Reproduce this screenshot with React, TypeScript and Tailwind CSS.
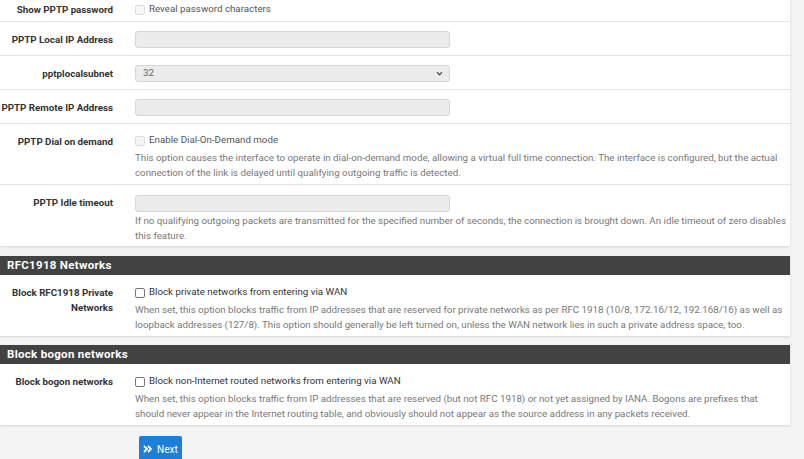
import React from 'react';

const font = { fontFamily: 'Roboto, "Open Sans", sans-serif' };

function Row({ label, children, className = '' }: { label: React.ReactNode; children: React.ReactNode; className?: string }) {
  return (
    <div className={`flex border-t border-[#e4e4e4] ${className}`}>
      <div className="w-[124px] shrink-0 pr-[11px] text-right text-[9.75px] font-bold leading-[15px] text-[#333] pt-[10px] whitespace-nowrap">
        {label}
      </div>
      <div className="flex-1 pl-[11px] pr-[1px]">{children}</div>
    </div>
  );
}

function Check({ text, disabled = false }: { text: string; disabled?: boolean }) {
  return (
    <label className={`flex items-center gap-[4px] h-[17px] text-[9.75px] ${disabled ? 'text-[#555]' : 'text-[#333]'}`}>
      <span
        className={`w-[10px] h-[10px] rounded-[2px] border ${disabled ? 'border-[#ddd] bg-[#f6f6f6]' : 'border-[#777] bg-white'}`}
      />
      {text}
    </label>
  );
}

function Help({ children }: { children: React.ReactNode }) {
  return <p className="text-[9.75px] leading-[15px] text-[#777]">{children}</p>;
}

function Input() {
  return <div className="w-[315px] h-[17px] rounded-[3px] border border-[#d6d6d6] bg-[#ececec]" />;
}

function Header({ title }: { title: string }) {
  return (
    <div className="h-[19px] bg-[#424242] text-white text-[11.5px] font-bold tracking-[0.3px] leading-[19px] pl-[7px]">
      {title}
    </div>
  );
}

export default function App() {
  return (
    <div className="w-[804px] h-[459px] overflow-hidden bg-[#f3f3f3]" style={font}>
      <div className="w-[790px] -mt-[11px]">
        {/* PPTP panel (scrolled) */}
        <div className="bg-white shadow-[0_1px_2px_rgba(0,0,0,0.12)]">
          <div className="flex h-[32px]">
            <div className="w-[124px] shrink-0 pr-[11px] text-right text-[9.75px] font-bold leading-[15px] text-[#333] pt-[13px]">
              Show PPTP password
            </div>
            <div className="pl-[11px] pt-[12px]">
              <Check text="Reveal password characters" disabled />
            </div>
          </div>
          <Row label="PPTP Local IP Address" className="h-[34px]">
            <div className="pt-[9px]">
              <Input />
            </div>
          </Row>
          <Row label="pptplocalsubnet" className="h-[34px]">
            <div className="pt-[9px]">
              <div className="w-[315px] h-[17px] rounded-[3px] border border-[#d6d6d6] bg-[#ececec] flex items-center justify-between pl-[7px] pr-[6px] text-[9.75px] text-[#666]">
                <span>32</span>
                <svg width="7" height="5" viewBox="0 0 8 6" fill="none">
                  <path d="M1 1.5 L4 4.5 L7 1.5" stroke="#555" strokeWidth="1.6" />
                </svg>
              </div>
            </div>
          </Row>
          <Row label="PPTP Remote IP Address" className="h-[34px]">
            <div className="pt-[9px]">
              <Input />
            </div>
          </Row>
          <Row label="PPTP Dial on demand" className="h-[61px]">
            <div className="pt-[8px]">
              <Check text="Enable Dial-On-Demand mode" disabled />
              <div className="mt-[1px]">
                <Help>
                  This option causes the interface to operate in dial-on-demand mode, allowing a virtual full time connection. The interface is configured, but the actual connection of the link is delayed until qualifying outgoing traffic is detected.
                </Help>
              </div>
            </div>
          </Row>
          <Row label="PPTP Idle timeout" className="h-[62px]">
            <div className="pt-[10px]">
              <Input />
              <div className="mt-[1px]">
                <Help>
                  If no qualifying outgoing packets are transmitted for the specified number of seconds, the connection is brought down. An idle timeout of zero disables this feature.
                </Help>
              </div>
            </div>
          </Row>
        </div>

        {/* RFC1918 */}
        <div className="mt-[10px] bg-white shadow-[0_1px_2px_rgba(0,0,0,0.12)]">
          <Header title="RFC1918 Networks" />
          <div className="flex h-[61px]">
            <div className="w-[124px] shrink-0 pr-[11px] text-right text-[9.75px] font-bold leading-[15px] text-[#333] pt-[10px]">
              Block RFC1918 Private Networks
            </div>
            <div className="flex-1 pl-[11px] pr-[1px] pt-[9px]">
              <Check text="Block private networks from entering via WAN" />
              <div className="mt-[1px]">
                <Help>
                  When set, this option blocks traffic from IP addresses that are reserved for private networks as per RFC 1918 (10/8, 172.16/12, 192.168/16) as well as loopback addresses (127/8). This option should generally be left turned on, unless the WAN network lies in such a private address space, too.
                </Help>
              </div>
            </div>
          </div>
        </div>

        {/* Bogon */}
        <div className="mt-[9px] bg-white shadow-[0_1px_2px_rgba(0,0,0,0.12)]">
          <Header title="Block bogon networks" />
          <div className="flex h-[61px]">
            <div className="w-[124px] shrink-0 pr-[11px] text-right text-[9.75px] font-bold leading-[15px] text-[#333] pt-[10px]">
              Block bogon networks
            </div>
            <div className="flex-1 pl-[11px] pr-[1px] pt-[9px]">
              <Check text="Block non-Internet routed networks from entering via WAN" />
              <div className="mt-[1px]">
                <Help>
                  When set, this option blocks traffic from IP addresses that are reserved (but not RFC 1918) or not yet assigned by IANA. Bogons are prefixes that should never appear in the Internet routing table, and obviously should not appear as the source address in any packets received.
                </Help>
              </div>
            </div>
          </div>
        </div>

        <div className="pl-[139px] pt-[11px]">
          <button className="flex items-center gap-[4px] h-[26px] px-[4px] rounded-[2px] bg-[#1e7fd8] text-white text-[10px]">
            <svg width="10" height="8" viewBox="0 0 10 8" fill="none">
              <path d="M1 1 L4 4 L1 7 M5 1 L8 4 L5 7" stroke="white" strokeWidth="1.8" />
            </svg>
            Next
          </button>
        </div>
      </div>
    </div>
  );
}
